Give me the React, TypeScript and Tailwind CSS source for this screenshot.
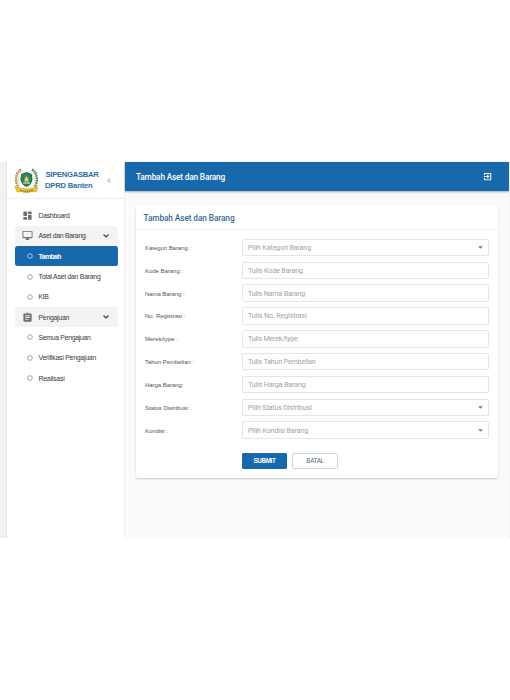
import React, { useLayoutEffect, useRef, useState } from "react";

function Logo() {
  return (
    <svg className="h-[26px] w-[25px] shrink-0" viewBox="0 0 25 26" fill="none">
      <path d="M7 1.500C1.500 5 .5 13 4.500 19.500" stroke="#ab8f4d" strokeWidth="2.400" strokeDasharray="1.700 .7" />
      <path d="M7.500 4.500C4 8 3.500 13.500 6.500 19" stroke="#efe3b4" strokeWidth="1.300" strokeDasharray="1.500 .7" />
      <path d="M18 1.500C23.500 5 24.500 13 20.500 19.500" stroke="#4f7f55" strokeWidth="2.400" strokeDasharray="1.700 .7" />
      <path d="M17.500 4.500C21 8 21.500 13.500 18.500 19" stroke="#dfe8d6" strokeWidth="1.300" strokeDasharray="1.500 .7" />
      <path d="M7.500 6.500L12.500 4.500L17.500 6.500L18 12Q17 17 12.500 18.500Q8 17 7 12Z" fill="#27894f" stroke="#1d5538" strokeWidth=".9" />
      <path d="M9.500 7H15.500V9.500H9.500Z" fill="#39799b" />
      <path d="M10.500 13.500V11L12.500 8L14.500 11V13.500Z" fill="#e5d259" />
      <path d="M9 15H16" stroke="#d7e3dc" strokeWidth="1.200" />
      <path d="M1 18.500L6 20Q12.500 22 19 20L24 18.500L22 24L18 23.500Q12.500 26 7 23.500L3 24Z" fill="#f1cc24" stroke="#a98d27" strokeWidth=".5" />
      <path d="M6 22Q12.500 24.500 19 22" stroke="#75632d" strokeWidth="1.200" strokeDasharray="1.500 .8" />
    </svg>
  );
}

function Chevron() {
  return (
    <svg className="absolute right-[8.500px] h-[6px] w-[8px]" viewBox="0 0 8 6" fill="none">
      <path d="M1.500 1.500L4 4L6.500 1.500" stroke="#3d3d3d" strokeWidth="1.200" />
    </svg>
  );
}

const icons = {
  dashboard: <path d="M3 13h8V3H3v10zm0 8h8v-6H3v6zm10 0h8V11h-8v10zm0-18v6h8V3h-8z" />,
  desktop: <path d="M21 2H3c-1.100 0-2 .9-2 2v12c0 1.100.9 2 2 2h7l-2 3v1h8v-1l-2-3h7c1.100 0 2-.9 2-2V4c0-1.100-.9-2-2-2zm0 13H3V4h18v11z" />,
  paper: <path d="M19 3h-4.180C14.400 1.840 13.300 1 12 1c-1.300 0-2.400.84-2.820 2H5c-1.100 0-2 .9-2 2v14c0 1.100.9 2 2 2h14c1.100 0 2-.9 2-2V5c0-1.100-.9-2-2-2zm-7 0c.55 0 1 .45 1 1s-.45 1-1 1-1-.45-1-1 .45-1 1-1zm2 14H7v-2h7v2zm3-4H7v-2h10v2zm0-4H7V7h10v2z" />,
};

/* A line of text tracked out or in to an exact measure. */
function Fit({ text, width, className = "" }: { text: string; width: number; className?: string }) {
  const ref = useRef<HTMLSpanElement>(null);
  const [spacing, setSpacing] = useState(0);
  useLayoutEffect(() => {
    const natural = ref.current!.getBoundingClientRect().width;
    setSpacing((width - natural) / text.length);
  }, [text, width]);
  return (
    <span ref={ref} className={`inline-block shrink-0 whitespace-nowrap pt-px leading-[10px] ${className}`} style={{ letterSpacing: spacing }}>
      {text}
    </span>
  );
}

type ItemProps = {
  label: string;
  width: number;
  icon?: keyof typeof icons;
  group?: boolean;
  active?: boolean;
};

function NavItem({ label, width, icon, group, active }: ItemProps) {
  return (
    <div className={`relative flex h-[20.3px] items-center rounded-[2.500px] ${active ? "bg-[#1769ab] text-white" : group ? "bg-[#f3f3f3]" : ""}`}>
      <div className="flex w-[23.500px] shrink-0 items-center pl-[7px]">
        {icon ? (
          <svg className="h-[11px] w-[11px] fill-[#707070]" viewBox="0 0 24 24">{icons[icon]}</svg>
        ) : (
          <svg className="ml-[5px] h-[6px] w-[6px]" viewBox="0 0 6 6" fill="none">
            <circle cx="3" cy="3" r="2.300" stroke={active ? "#c9deef" : "#8c8c8c"} strokeWidth=".8" />
          </svg>
        )}
      </div>
      <Fit text={label} width={width} className={active ? "font-bold" : ""} />
      {group && <Chevron />}
    </div>
  );
}

const nav: ItemProps[] = [
  { label: "Dashboard", width: 31, icon: "dashboard" },
  { label: "Aset dan Barang", width: 47, icon: "desktop", group: true },
  { label: "Tambah", width: 22.5, active: true },
  { label: "Total Aset dan Barang", width: 62 },
  { label: "KIB", width: 10 },
  { label: "Pengajuan", width: 30.5, icon: "paper", group: true },
  { label: "Semua Pengajuan", width: 52 },
  { label: "Verifikasi Pengajuan", width: 57.5 },
  { label: "Realisasi", width: 26 },
];

const fields = [
  { label: "Kategori Barang :", lw: 46, hint: "Pilih Kategori Barang", hw: 63, select: true },
  { label: "Kode Barang :", lw: 38, hint: "Tulis Kode Barang", hw: 55 },
  { label: "Nama Barang :", lw: 39.5, hint: "Tulis Nama Barang", hw: 57 },
  { label: "No. Registrasi :", lw: 40.5, hint: "Tulis No. Registrasi", hw: 58.5 },
  { label: "Merek/type :", lw: 33, hint: "Tulis Merek/type", hw: 49.5 },
  { label: "Tahun Pembelian :", lw: 49, hint: "Tulis Tahun Pembelian", hw: 67.5 },
  { label: "Harga Barang:", lw: 38.5, hint: "Tulis Harga Barang", hw: 57.5 },
  { label: "Status Distribusi :", lw: 46, hint: "Pilih Status Distribusi", hw: 63.5, select: true },
  { label: "Kondisi :", lw: 23, hint: "Pilih Kondisi Barang", hw: 60, select: true },
];

export default function App() {
  return (
    <div className="h-[700px] w-[510px] overflow-hidden bg-white pt-[162px] font-[Roboto,sans-serif]">
      <div className="flex h-[376px] bg-[#fafafa]">
        <div className="w-[7px] border-r border-[#e2e2e2] bg-[#f2f2f2]" />
        <aside className="w-[118px] border-r border-[#ededed] bg-white">
          <div className="flex h-[36.500px] border-b border-[#eee] pl-[7px] pt-[5.500px]">
            <Logo />
            <div className="ml-[6px] w-[61px] pt-px font-[Liberation_Sans,Arial,sans-serif] text-[7.700px] font-bold leading-none text-[#2e6ea5]">
              <div className="ml-[.5px] h-[11px]"><Fit text="SIPENGASBAR" width={53} /></div>
              <div className="h-[11px]"><Fit text="DPRD Banten" width={47.5} /></div>
            </div>
            <svg className="mt-[9px] h-[7px] w-[6px]" viewBox="0 0 6 7" fill="none"><path d="M4 1.500L2 3.500L4 5.500" stroke="#666" strokeWidth=".9" /></svg>
          </div>
          <nav className="ml-[8px] mr-[6px] pt-[7px] font-[Liberation_Sans,Arial,sans-serif] text-[6.900px] text-[#383838]">
            {nav.map((n) => <NavItem key={n.label} {...n} />)}
          </nav>
        </aside>
        <main className="w-[384px]">
          <header className="flex h-[28.500px] items-center justify-between bg-[#1769ab] pl-[11px] pr-[17px] text-[8.300px] font-medium text-white shadow-[0_1px_2px_#0005]">
            <Fit text="Tambah Aset dan Barang" width={89} />
            <svg className="h-[9px] w-[9px]" viewBox="0 0 9 9" fill="none" stroke="#e6f1fa">
              <path d="M1.500 3.200V1.500H7.700V7.700H1.500V5.800" strokeWidth="1.100" />
              <path d="M.7 4.500H5.800M4.200 2.900L5.800 4.500L4.200 6.100" strokeWidth="1.100" />
            </svg>
          </header>
          <section className="ml-[11px] mt-[14.500px] h-[272.500px] w-[362px] rounded-[2px] bg-white shadow-[0_1px_2px_#0003]">
            <h1 className="flex h-[25px] items-center border-b border-[#eee] pl-[7.500px] text-[8.300px] font-medium text-[#3a6b98]">
              <Fit text="Tambah Aset dan Barang" width={91} />
            </h1>
            <form className="pl-[9px] pr-[9px] pt-[6px]">
              {fields.map(({ label, lw, hint, hw, select }) => (
                <div key={label} className="flex h-[22.850px] items-center">
                  <div className="flex w-[96.500px] items-center font-[Liberation_Sans,Arial,sans-serif] text-[6px] text-[#555]">
                    <Fit text={label} width={lw} />
                  </div>
                  <div className="flex h-[17.500px] flex-1 items-center justify-between rounded-[2px] border border-[#e4e4e4] bg-white pl-[5.500px] pr-[5px] text-[7.200px] text-[#a3a3a3]">
                    <Fit text={hint} width={hw} />
                    {select && <svg className="h-[3px] w-[5px]" viewBox="0 0 5 3"><path d="M0 .3H5L2.500 2.700Z" fill="#808080" /></svg>}
                  </div>
                </div>
              ))}
              <div className="flex gap-[5px] pl-[97px] pt-[11px] font-[Liberation_Sans,Arial,sans-serif] text-[6.300px]">
                <button type="button" className="flex h-[16px] w-[45px] items-center justify-center rounded-[1.500px] bg-[#1769ab] font-bold text-white">
                  <Fit text="SUBMIT" width={22} />
                </button>
                <button type="button" className="flex h-[16px] w-[46px] items-center justify-center rounded-[1.500px] border border-[#c7d5e1] text-[#506b82]">
                  <Fit text="BATAL" width={17.5} />
                </button>
              </div>
            </form>
          </section>
        </main>
        <div className="w-px bg-[#f2f2f2]" />
      </div>
    </div>
  );
}
